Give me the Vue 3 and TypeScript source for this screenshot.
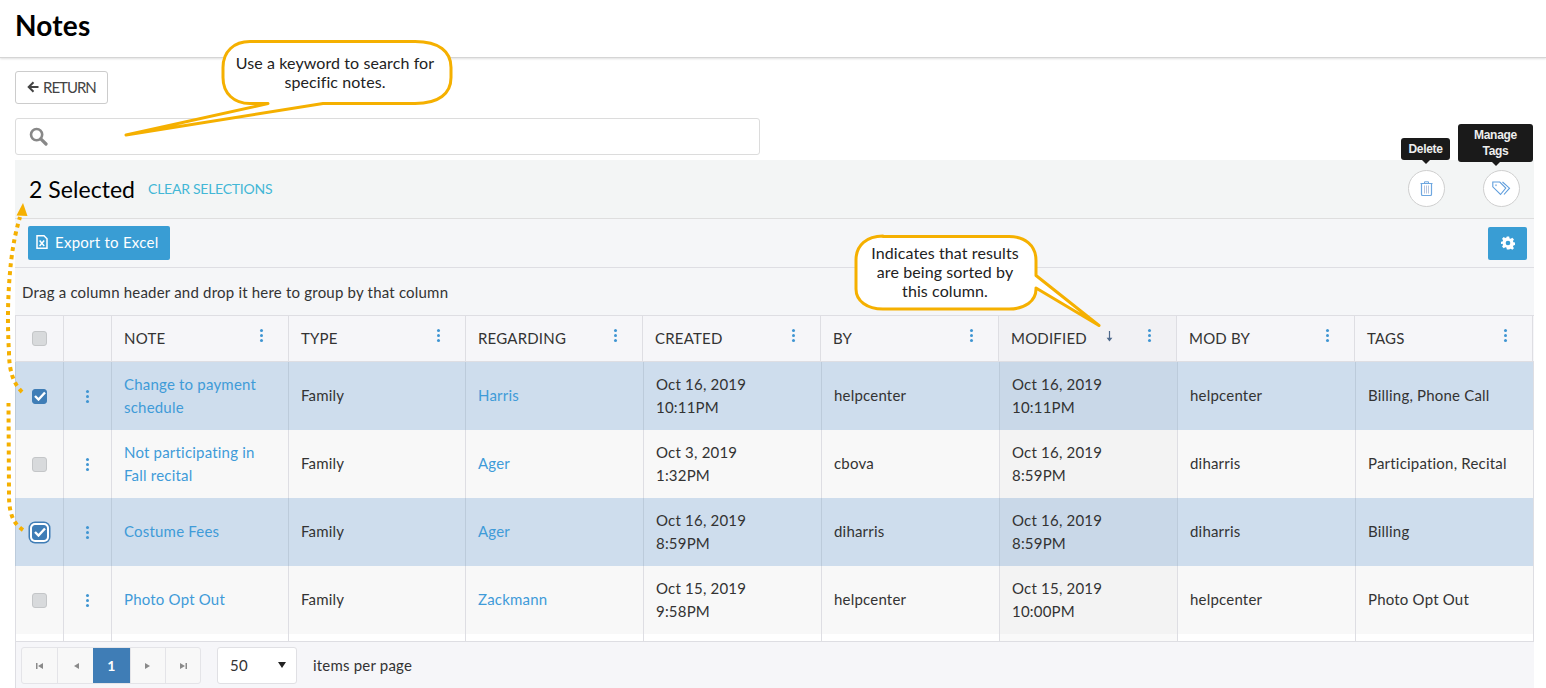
<script setup lang="ts">
interface Row { note: string[]; regarding: string; created: string[]; by: string; modified: string[]; modBy: string; tags: string; sel: boolean; focus?: boolean }
const cols = [
  { name: 'NOTE' }, { name: 'TYPE' }, { name: 'REGARDING' }, { name: 'CREATED' },
  { name: 'BY' }, { name: 'MODIFIED', sorted: true }, { name: 'MOD BY' }, { name: 'TAGS' },
]
const rows: Row[] = [
  { note: ['Change to payment', 'schedule'], regarding: 'Harris', created: ['Oct 16, 2019', '10:11PM'], by: 'helpcenter', modified: ['Oct 16, 2019', '10:11PM'], modBy: 'helpcenter', tags: 'Billing, Phone Call', sel: true },
  { note: ['Not participating in', 'Fall recital'], regarding: 'Ager', created: ['Oct 3, 2019', '1:32PM'], by: 'cbova', modified: ['Oct 16, 2019', '8:59PM'], modBy: 'diharris', tags: 'Participation, Recital', sel: false },
  { note: ['Costume Fees'], regarding: 'Ager', created: ['Oct 16, 2019', '8:59PM'], by: 'diharris', modified: ['Oct 16, 2019', '8:59PM'], modBy: 'diharris', tags: 'Billing', sel: true, focus: true },
  { note: ['Photo Opt Out'], regarding: 'Zackmann', created: ['Oct 15, 2019', '9:58PM'], by: 'helpcenter', modified: ['Oct 15, 2019', '10:00PM'], modBy: 'helpcenter', tags: 'Photo Opt Out', sel: false },
]
</script>

<template>
  <div class="page">
    <header class="top"><h1>Notes</h1></header>
    <div class="content">
      <button class="return">
        <svg width="12" height="12" viewBox="0 0 12 12"><path d="M11.500 6H2M6.500 1.200 1.700 6l4.800 4.800" fill="none" stroke="#444" stroke-width="2"/></svg>
        <span>RETURN</span>
      </button>
      <div class="search">
        <svg width="19" height="19" viewBox="0 0 19 19"><circle cx="7.600" cy="7.600" r="5.600" fill="none" stroke="#888" stroke-width="2.600"/><path d="M11.800 11.800 17 17" stroke="#888" stroke-width="3.200" stroke-linecap="round"/></svg>
      </div>
      <section class="grid">
        <div class="selected">
          <span class="count">2 Selected</span>
          <a class="clear">CLEAR SELECTIONS</a>
          <div class="actions">
            <span class="round trash">
              <svg width="13" height="15" viewBox="0 0 13 15" fill="none" stroke="#6ea7e0"><path d="M.5 2.500h12M4.500 2.300V.8h4v1.500" stroke-width="1"/><path d="M1.500 2.500v10.700c0 .8.500 1.300 1.200 1.300h7.600c.7 0 1.200-.5 1.200-1.300V2.500" stroke-width="1.200"/><path d="M4.500 4.500v8M6.500 4.500v8M8.500 4.500v8" stroke="#b9c6de" stroke-width="1"/></svg>
            </span>
            <span class="round tag">
              <svg width="19" height="15" viewBox="0 0 19 15" fill="none" stroke="#5f9edd" stroke-width="1.100"><path d="M.8 1h7l6 6-5.300 6.500L.8 5.800Z"/><path d="M10.500 1l7 6.200-5.500 6.300"/><circle cx="4" cy="4.300" r="1" fill="#9cc3ea" stroke="none"/></svg>
            </span>
          </div>
        </div>
        <div class="toolbar">
          <button class="excel">
            <svg width="12" height="14" viewBox="0 0 12 14"><path d="M1 .8h7l3 3v9.400H1Z" fill="none" stroke="#fff" stroke-width="1.500"/><path d="M3.600 5.500 8.200 11M8.200 5.500 3.600 11" stroke="#fff" stroke-width="1.500"/></svg>
            Export to Excel
          </button>
          <button class="gear" aria-label="Settings">
            <svg width="14" height="14" viewBox="0 0 24 24"><path fill="#fff" fill-rule="evenodd" d="M10 1h4l.7 3.100 2 .8 2.700-1.700 2.800 2.800-1.700 2.700.8 2 3.100.7v4l-3.100.7-.8 2 1.700 2.700-2.800 2.800-2.700-1.700-2 .8L14 23h-4l-.7-3.100-2-.8-2.700 1.700-2.800-2.800 1.700-2.700-.8-2L-.4 14v-4l3.100-.7.8-2L1.800 4.600l2.800-2.800 2.700 1.700 2-.8ZM12 8a4 4 0 1 0 0 8 4 4 0 0 0 0-8Z"/></svg>
          </button>
        </div>
        <div class="group">Drag a column header and drop it here to group by that column</div>
        <div class="row head">
          <div class="cell c-check"><span class="box"></span></div>
          <div class="cell c-menu"></div>
          <div v-for="c in cols" :key="c.name" class="cell th" :class="{ sorted: c.sorted }">
            <span>{{ c.name }}</span>
            <span v-if="c.sorted" class="arrow">
              <svg width="7" height="11" viewBox="0 0 7 11"><path d="M3.500 0v8" fill="none" stroke="#4f6a8c" stroke-width="1.200"/><path d="M.6 6.800h5.800L3.500 10.500Z" fill="#4f6a8c"/></svg>
            </span>
            <i class="dots"></i>
          </div>
        </div>
        <div v-for="(r, i) in rows" :key="i" class="row body" :class="{ picked: r.sel }">
          <div class="cell c-check">
            <span class="box" :class="{ on: r.sel, focus: r.focus }">
              <svg v-if="r.sel" width="12" height="10" viewBox="0 0 12 10"><path d="M1 5l3.500 3.500L11 1.500" fill="none" stroke="#fff" stroke-width="2.400"/></svg>
            </span>
          </div>
          <div class="cell c-menu"><i class="dots"></i></div>
          <div class="cell td link" :class="{ single: r.note.length === 1 }"><div v-for="l in r.note" :key="l">{{ l }}</div></div>
          <div class="cell td single">Family</div>
          <div class="cell td link single">{{ r.regarding }}</div>
          <div class="cell td"><div v-for="l in r.created" :key="l">{{ l }}</div></div>
          <div class="cell td single">{{ r.by }}</div>
          <div class="cell td mod"><div v-for="l in r.modified" :key="l">{{ l }}</div></div>
          <div class="cell td single">{{ r.modBy }}</div>
          <div class="cell td single">{{ r.tags }}</div>
        </div>
        <div class="row body filler">
          <div class="cell c-check"></div><div class="cell c-menu"></div>
          <div v-for="c in cols" :key="c.name" class="cell td" :class="{ mod: c.sorted }"></div>
        </div>
        <footer class="pager">
          <div class="pages">
            <span class="pg"><svg width="8" height="8" viewBox="0 0 8 8"><path fill="#8a8a8a" d="M0 1h1.500v6H0ZM7 1v6L2 4Z"/></svg></span>
            <span class="pg wide"><svg width="8" height="8" viewBox="0 0 8 8"><path fill="#8a8a8a" d="M7 1v6L2 4Z"/></svg></span>
            <span class="pg cur">1</span>
            <span class="pg"><svg width="8" height="8" viewBox="0 0 8 8"><path fill="#8a8a8a" d="M1 1v6l5-3Z"/></svg></span>
            <span class="pg"><svg width="8" height="8" viewBox="0 0 8 8"><path fill="#8a8a8a" d="M1 1v6l5-3ZM6.500 1H8v6H6.500Z"/></svg></span>
          </div>
          <div class="size"><span>50</span><svg width="8" height="6" viewBox="0 0 8 6"><path fill="#222" d="M0 0h8L4 6Z"/></svg></div>
          <span class="ipp">items per page</span>
        </footer>
      </section>
    </div>

    <div class="tip tip-del">Delete</div>
    <div class="tip tip-tag">Manage<br />Tags</div>

    <svg class="overlay" width="1546" height="688" viewBox="0 0 1546 688" fill="none">
      <path d="M250 41.500h165c24 0 36 10 36 26v10c0 16-12 26-36 26H323L126 135l142-31.500h-18c-16 0-27-10-27-26v-10c0-16 11-26 27-26Z" fill="#fff" stroke="#f5b000" stroke-width="3" stroke-linejoin="round"/>
      <path d="M883 236.500h126c16 0 27 9 27 24v15l63 50-63-37.500v1c0 12-11 20-27 20H883c-16 0-27-8-27-20v-29c0-15 11-24 27-24Z" fill="#fff" stroke="#f5b000" stroke-width="3" stroke-linejoin="round"/>
      <path d="M22 392C14 384 9 372 9 352 7 320 8 290 11 262 13 245 16 230 20 217" stroke="#f5b000" stroke-width="4" stroke-dasharray="4 4"/>
      <path d="M23 530C14 524 9 515 9 495L8.500 403" stroke="#f5b000" stroke-width="4" stroke-dasharray="4 4"/>
      <path d="M23 203 16.500 215.500 27.500 216Z" fill="#f5b000"/>
    </svg>
    <div class="note note-a">Use a keyword to search for<br />specific notes.</div>
    <div class="note note-b">Indicates that results<br />are being sorted by<br />this column.</div>
  </div>
</template>

<style>
html, body { margin: 0; background: #fff; overflow: hidden; }
</style>

<style scoped>
.page { position: relative; width: 1546px; height: 688px; overflow: hidden; font-family: Lato, sans-serif; font-size: 15px; letter-spacing: .2px; color: #333; }
.top { height: 58px; box-sizing: border-box; border-bottom: 1px solid #d5d5d5; box-shadow: 0 1px 2px rgba(0,0,0,.12); padding-left: 15px; }
h1 { margin: 0; font-size: 28px; font-weight: 700; line-height: 51px; color: #000; }
.content { padding: 13px 12px 0 15px; }
.return { display: flex; align-items: center; gap: 4px; box-sizing: border-box; width: 93px; height: 33px; padding: 0 0 1px 11px; background: #fff; border: 1px solid #ccc; border-radius: 3px; font: 15px Lato, sans-serif; color: #444; letter-spacing: -1px; }
.search { display: flex; align-items: center; box-sizing: border-box; width: 745px; height: 37px; margin-top: 14px; padding-left: 13px; border: 1px solid #dcdcdc; border-radius: 3px; background: #fff; }
.grid { width: 1519px; margin-top: 5px; }
.selected { display: flex; align-items: center; height: 59px; box-sizing: border-box; padding: 0 0 1px 14px; background: #f3f5f5; border-bottom: 1px solid #dedede; position: relative; }
.count { font-size: 23px; letter-spacing: .05px; color: #000; }
.clear { margin-left: 13px; font-size: 14px; color: #42b7d6; letter-spacing: -.25px; }
.actions { margin-left: auto; display: flex; gap: 38px; padding: 0 14px 0 0; }
.round { display: flex; align-items: center; justify-content: center; width: 37px; height: 37px; box-sizing: border-box; border: 1px solid #cfcfcf; border-radius: 50%; background: #fff; }
.toolbar { display: flex; align-items: center; justify-content: space-between; height: 49px; box-sizing: border-box; padding: 0 7px 0 13px; background: #f5f6f8; border-bottom: 1px solid #dedee3; }
.excel { display: flex; align-items: center; gap: 7px; width: 142px; height: 34px; box-sizing: border-box; padding: 0 0 2px 8px; border: 0; border-radius: 2px; background: #399dd4; color: #fff; font: 15px Lato, sans-serif; letter-spacing: .25px; }
.gear { display: flex; align-items: center; justify-content: center; width: 39px; height: 33px; padding: 0; border: 0; border-radius: 2px; background: #399dd4; }
.group { height: 48px; box-sizing: border-box; padding-left: 7px; line-height: 48px; background: #f5f6f8; border-bottom: 1px solid #dedee3; color: #333; }
.row { display: grid; grid-template-columns: 48px 48px 177px 177px 177px 178px 178px 178px 178px 179px; width: 1519px; box-sizing: border-box; }
.cell { display: flex; align-items: center; min-width: 0; box-sizing: border-box; border-left: 1px solid #dedee3; }
.row > .cell:last-child { border-right: 1px solid #dedee3; }
.head { height: 46px; background: #f6f6f9; border-bottom: 1px solid #dedee3; }
.th { position: relative; padding: 0 0 2px 12px; color: #333; }
.th.sorted { background: #f1f1f4; }
.arrow { position: absolute; left: 107px; top: 15px; line-height: 0; }
.dots { width: 3px; height: 3px; border-radius: 50%; background: #3f95d2; box-shadow: 0 -5px 0 #3f95d2, 0 5px 0 #3f95d2; }
.th .dots { position: absolute; right: 25px; top: 18px; }
.c-check, .c-menu { justify-content: center; }
.box { display: flex; align-items: center; justify-content: center; width: 15px; height: 15px; box-sizing: border-box; border: 1px solid #c4c6c8; border-radius: 3px; background: #d8dadc; }
.box.on { background: #3f7db6; border-color: #3f7db6; }
.box.focus { box-shadow: 0 0 0 2px #fff, 0 0 0 3.500px #3f7db6; }
.body { grid-template-columns: 48px 48px 177px 177px 178px 178px 178px 178px 178px 179px; height: 68px; background: #f8f8f8; }
.picked { background: #cedded; }
.picked .cell { border-left-color: #bccbdb; }
.td { display: flex; flex-direction: column; align-items: flex-start; justify-content: center; padding-left: 12px; line-height: 23px; color: #333; }
.td.single { padding-bottom: 2px; }
.td.mod { background: #f3f3f3; }
.picked .td.mod { background: #c9d8e8; }
.link { color: #3f9bd8; }
.filler { height: 8px; background: #fff; border-bottom: 1px solid #dedee3; }
.filler .td.mod { background: #f9f9f9; }
.pager { display: flex; align-items: center; height: 46px; padding: 1px 0 0 5px; box-sizing: border-box; background: #f6f6f9; border-left: 1px solid #dedee3; }
.pages { display: flex; height: 37px; box-sizing: border-box; border: 1px solid #e4e4e8; border-radius: 3px; background: #f8f8f8; }
.pg { display: flex; align-items: center; justify-content: center; width: 35px; box-sizing: border-box; border-left: 1px solid #e4e4e8; }
.pg:first-child { border-left: 0; }
.pg.wide { width: 36px; }
.pg.cur { width: 37px; background: #3f7db6; color: #fff; font-weight: 700; font-size: 14px; border: 0; }
.size { display: flex; align-items: center; justify-content: space-between; box-sizing: border-box; width: 80px; height: 37px; margin-left: 16px; padding: 0 10px 1px 12px; background: #fff; border: 1px solid #e0e0e4; border-radius: 3px; }
.ipp { margin: 0 0 2px 16px; }
.overlay { position: absolute; left: 0; top: 0; pointer-events: none; }
.note { position: absolute; text-align: center; font-size: 16px; letter-spacing: .1px; line-height: 19px; color: #222; }
.note-a { left: 222px; top: 53px; width: 226px; }
.note-b { left: 856px; top: 243px; width: 178px; }
.tip { position: absolute; display: flex; align-items: center; justify-content: center; text-align: center; background: #1a1a1a; color: #eee; font: 700 12px/16px "Liberation Sans", sans-serif; letter-spacing: -.3px; border-radius: 3px; }
.tip::after { content: ""; position: absolute; left: 50%; bottom: -4px; margin-left: -4px; border: 4px solid transparent; border-bottom: 0; border-top-color: #1a1a1a; }
.tip-del { left: 1401px; top: 138px; width: 49px; height: 22px; }
.tip-tag { left: 1458px; top: 124px; width: 75px; height: 38px; }
</style>
